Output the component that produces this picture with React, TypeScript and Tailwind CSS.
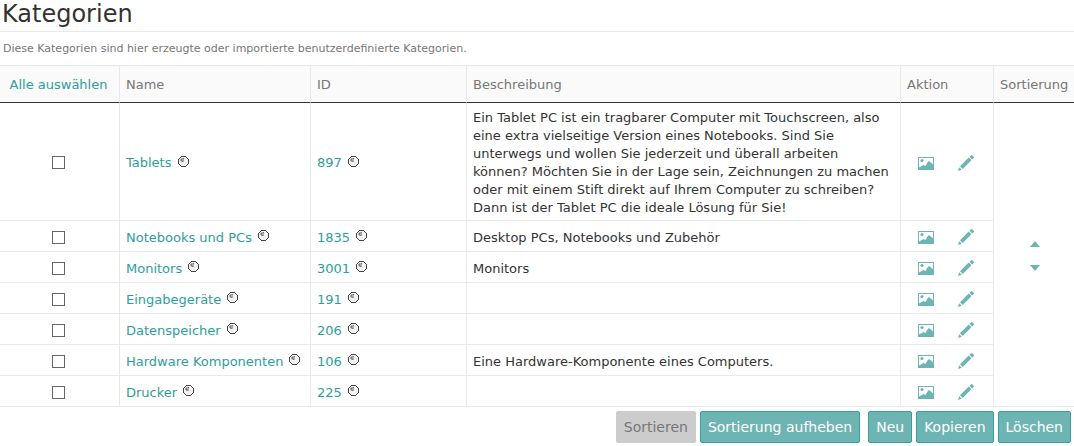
type Category = {
  name: string;
  id: number;
  description?: string;
};

const categories: Category[] = [
  {
    name: 'Tablets',
    id: 897,
    description:
      'Ein Tablet PC ist ein tragbarer Computer mit Touchscreen, also eine extra vielseitige Version eines Notebooks. Sind Sie unterwegs und wollen Sie jederzeit und überall arbeiten können? Möchten Sie in der Lage sein, Zeichnungen zu machen oder mit einem Stift direkt auf Ihrem Computer zu schreiben? Dann ist der Tablet PC die ideale Lösung für Sie!',
  },
  { name: 'Notebooks und PCs', id: 1835, description: 'Desktop PCs, Notebooks und Zubehör' },
  { name: 'Monitors', id: 3001, description: 'Monitors' },
  { name: 'Eingabegeräte', id: 191 },
  { name: 'Datenspeicher', id: 206 },
  { name: 'Hardware Komponenten', id: 106, description: 'Eine Hardware-Komponente eines Computers.' },
  { name: 'Drucker', id: 225 },
];

function EyeIcon() {
  return (
    <svg className="mb-1 h-[11px] w-[11px] shrink-0" viewBox="0 0 11 11" shapeRendering="crispEdges" aria-hidden="true">
      <path d="M3 1h5v1h1v1h1v5H9v1H8v1H3V9H2V8H1V3h1V2h1z" fill="#f2f2f2" />
      <path d="M3 0h5v1H3zM2 1h1v1H2zM8 1h1v1H8zM1 2h1v1H1zM9 2h1v1H9zM0 3h1v5H0zM10 3h1v5h-1zM1 8h1v1H1zM9 8h1v1H9zM2 9h1v1H2zM8 9h1v1H8zM3 10h5v1H3z" fill="#444" />
      <path d="M3 2h2v1H3zM2 3h1v2H2zM4 3h2v2H4zM3 5h1v1H3zM5 5h1v1H5z" fill="#aaa" />
      <path d="M3 3h1v2H3zM5 2h1v1H5zM4 5h1v1H4z" fill="#777" />
    </svg>
  );
}

function PictureIcon() {
  return (
    <svg className="h-4 w-4" viewBox="0 0 16 16" fill="#6eb4b3" aria-hidden="true">
      <path d="M0 2h16v1H0zM0 3h1v12H0zM15 3h1v12h-1zM1 14h14v1H1z" />
      <circle cx="4" cy="5.500" r="1.600" />
      <path d="M1 14v-1.500L5.500 10l2 1L9 8.200l1.300-1.600q.7-.5 1.400 0L13.500 8 15 9.500V14z" />
    </svg>
  );
}

function PencilIcon() {
  return (
    <svg className="h-4 w-4" viewBox="0 0 16 16" fill="#6eb4b3" aria-hidden="true">
      <path d="M0 16l1.200-3.800 2.600 2.600z" />
      <path d="M2 11.300L10.700 2.600l2.700 2.700L4.700 14z" />
      <path d="M11.500 1.800L13.100.2q.5-.4 1 0l1.700 1.700q.4.500 0 1L14.200 4.500z" />
    </svg>
  );
}

const cell = 'border-r border-b border-[#e9e9e9] px-[6px] pt-[6px] pb-[3px]';
const headCell = 'h-[38px] border-t border-r border-b border-[#e9e9e9] border-b-[#333] px-[6px] pt-px text-left font-normal';
const button = 'h-8 rounded-xs border border-[#35a09d] bg-[#6eb4b3] px-[7px] text-white';

function InfoLink({ label }: { label: string | number }) {
  return (
    <a href="#" className="flex items-center gap-[6px] whitespace-nowrap text-[#2f9e9b]">
      {label}
      <EyeIcon />
    </a>
  );
}

export default function App() {
  return (
    <main className="bg-white pb-[3px] font-['DejaVu_Sans',Verdana,sans-serif] text-[13px] leading-[18px] text-[#333]">
      <h1 className="h-8 border-b border-[#e9e9e9] pl-[2px] text-[24px] leading-[28px]">Kategorien</h1>
      <p className="px-[3px] pt-2 pb-[7px] text-[11px] text-[#777]">
        Diese Kategorien sind hier erzeugte oder importierte benutzerdefinierte Kategorien.
      </p>
      <table className="w-full table-fixed border-separate border-spacing-0">
        <colgroup>
          <col className="w-[120px]" />
          <col className="w-[191px]" />
          <col className="w-[156px]" />
          <col />
          <col className="w-[93px]" />
          <col className="w-20" />
        </colgroup>
        <thead className="bg-[#fafafa] text-[#777]">
          <tr>
            <th className={headCell}>
              <button type="button" className="w-full whitespace-nowrap pr-[2px] text-center text-[#2f9e9b]">
                Alle auswählen
              </button>
            </th>
            <th className={headCell}>Name</th>
            <th className={headCell}>ID</th>
            <th className={headCell}>Beschreibung</th>
            <th className={headCell}>Aktion</th>
            <th className="border-t border-b border-[#e9e9e9] border-b-[#333] px-[6px] pt-px text-left font-normal">
              Sortierung
            </th>
          </tr>
        </thead>
        <tbody>
          {categories.map((category, index) => (
            <tr key={category.id} className="h-[31px]">
              <td className="border-r border-b border-[#e9e9e9] pt-[2px] pr-[2px]">
                <input
                  type="checkbox"
                  aria-label={category.name}
                  className="mx-auto block size-[13px] appearance-none border border-[#666] bg-white checked:bg-[#6eb4b3]"
                />
              </td>
              <td className={cell}>
                <InfoLink label={category.name} />
              </td>
              <td className={cell}>
                <InfoLink label={category.id} />
              </td>
              <td className={cell}>{category.description}</td>
              <td className="border-r border-b border-[#e9e9e9] pt-[2px] pr-[2px]">
                <div className="flex justify-center gap-6">
                  <button type="button" aria-label="Bild">
                    <PictureIcon />
                  </button>
                  <button type="button" aria-label="Bearbeiten">
                    <PencilIcon />
                  </button>
                </div>
              </td>
              {index === 0 && (
                <td rowSpan={categories.length} className="border-b border-[#e9e9e9] pt-[2px] pl-[2px]">
                  <div className="flex flex-col items-center gap-[18px]">
                    <button type="button" aria-label="Nach oben">
                      <svg className="h-[6px] w-[10px]" viewBox="0 0 10 6" fill="#6eb4b3">
                        <path d="M5 0l5 6H0z" />
                      </svg>
                    </button>
                    <button type="button" aria-label="Nach unten">
                      <svg className="h-[6px] w-[10px]" viewBox="0 0 10 6" fill="#6eb4b3">
                        <path d="M5 6L0 0h10z" />
                      </svg>
                    </button>
                  </div>
                </td>
              )}
            </tr>
          ))}
        </tbody>
      </table>
      <div className="flex flex-wrap justify-end gap-2 px-[3px] pt-1 text-[14px]">
        <div className="flex gap-1">
          <button type="button" disabled className="h-8 rounded-xs border border-[#ccc] bg-[#ccc] px-[7px] text-[#777]">
            Sortieren
          </button>
          <button type="button" className={button}>
            Sortierung aufheben
          </button>
        </div>
        <div className="flex gap-1">
          <button type="button" className={button}>
            Neu
          </button>
          <button type="button" className={button}>
            Kopieren
          </button>
          <button type="button" className={button}>
            Löschen
          </button>
        </div>
      </div>
    </main>
  );
}
